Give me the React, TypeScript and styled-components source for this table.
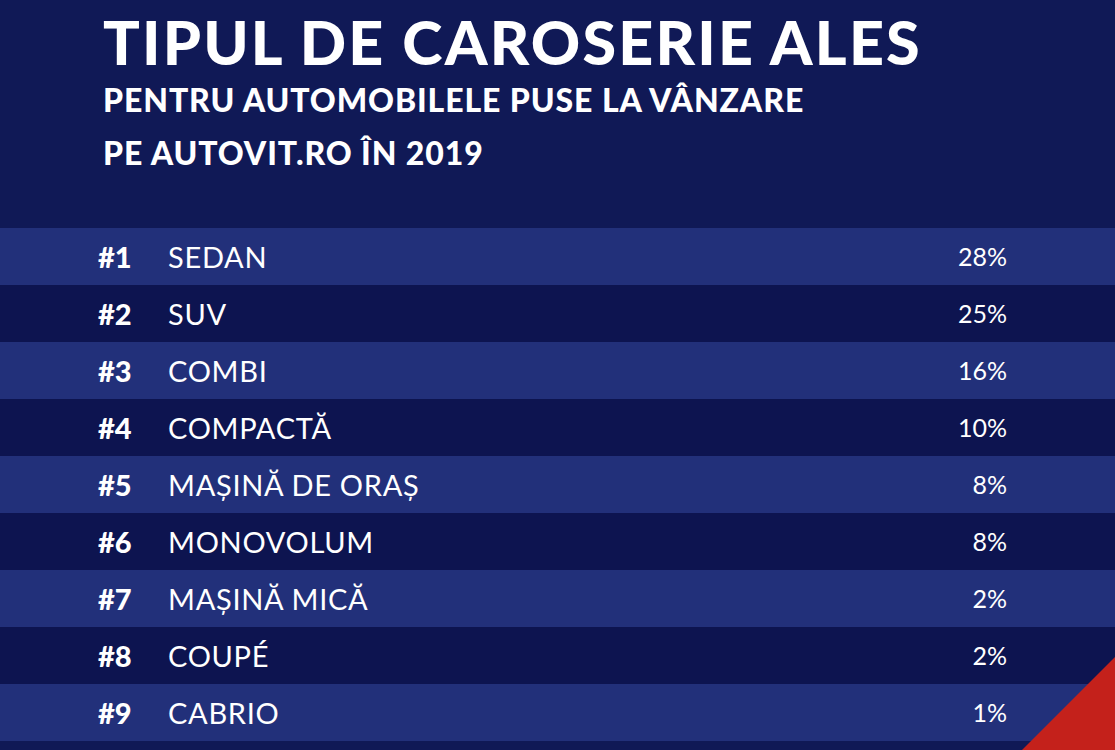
import React from 'react'
import styled, { createGlobalStyle } from 'styled-components'

const GlobalStyle = createGlobalStyle`
  html, body {
    margin: 0;
    padding: 0;
    background: #101956;
  }
  body {
    font-family: Lato, "Noto Sans", sans-serif;
    color: #ffffff;
  }
`

const Page = styled.div`
  position: relative;
  width: 1115px;
  height: 750px;
  overflow: hidden;
  background: #101956;
`

const Header = styled.header`
  padding: 11px 0 0 103px;
`

const Title = styled.h1`
  margin: 0;
  font-size: 61px;
  line-height: 61px;
  font-weight: 900;
  letter-spacing: 2.2px;
`

const Subtitle = styled.h2`
  margin: 1px 0 0;
  font-size: 32px;
  line-height: 53px;
  font-weight: 900;
  letter-spacing: 0.9px;
`

const Table = styled.div`
  margin-top: 49px;
  display: flex;
  flex-direction: column;
`

const Row = styled.div<{ $light: boolean }>`
  display: flex;
  align-items: center;
  height: 57px;
  padding: 0 108px 0 98px;
  background: ${p => (p.$light ? '#22307a' : '#0d1450')};
`

const Rank = styled.span`
  width: 70px;
  font-size: 29px;
  line-height: 57px;
  font-weight: 900;
`

const Name = styled.span`
  flex: 1;
  font-size: 29px;
  line-height: 57px;
  font-weight: 400;
  letter-spacing: 0.7px;
`

const Share = styled.span`
  font-size: 25px;
  line-height: 57px;
  font-weight: 400;
  text-align: right;
`

const Corner = styled.div`
  position: absolute;
  right: 0;
  bottom: 0;
  width: 93px;
  height: 93px;
  background: #c4211b;
  clip-path: polygon(100% 0, 100% 100%, 0 100%);
`

const rows = [
  { name: 'SEDAN', share: '28%' },
  { name: 'SUV', share: '25%' },
  { name: 'COMBI', share: '16%' },
  { name: 'COMPACTĂ', share: '10%' },
  { name: 'MAȘINĂ DE ORAȘ', share: '8%' },
  { name: 'MONOVOLUM', share: '8%' },
  { name: 'MAȘINĂ MICĂ', share: '2%' },
  { name: 'COUPÉ', share: '2%' },
  { name: 'CABRIO', share: '1%' },
]

const App = () => {
  return (
    <Page>
      <GlobalStyle />
      <Header>
        <Title>TIPUL DE CAROSERIE ALES</Title>
        <Subtitle>
          PENTRU AUTOMOBILELE PUSE LA VÂNZARE
          <br />
          PE AUTOVIT.RO ÎN 2019
        </Subtitle>
      </Header>
      <Table>
        {rows.map((r, i) => (
          <Row key={r.name} $light={i % 2 === 0}>
            <Rank>#{i + 1}</Rank>
            <Name>{r.name}</Name>
            <Share>{r.share}</Share>
          </Row>
        ))}
      </Table>
      <Corner />
    </Page>
  )
}

export default App
